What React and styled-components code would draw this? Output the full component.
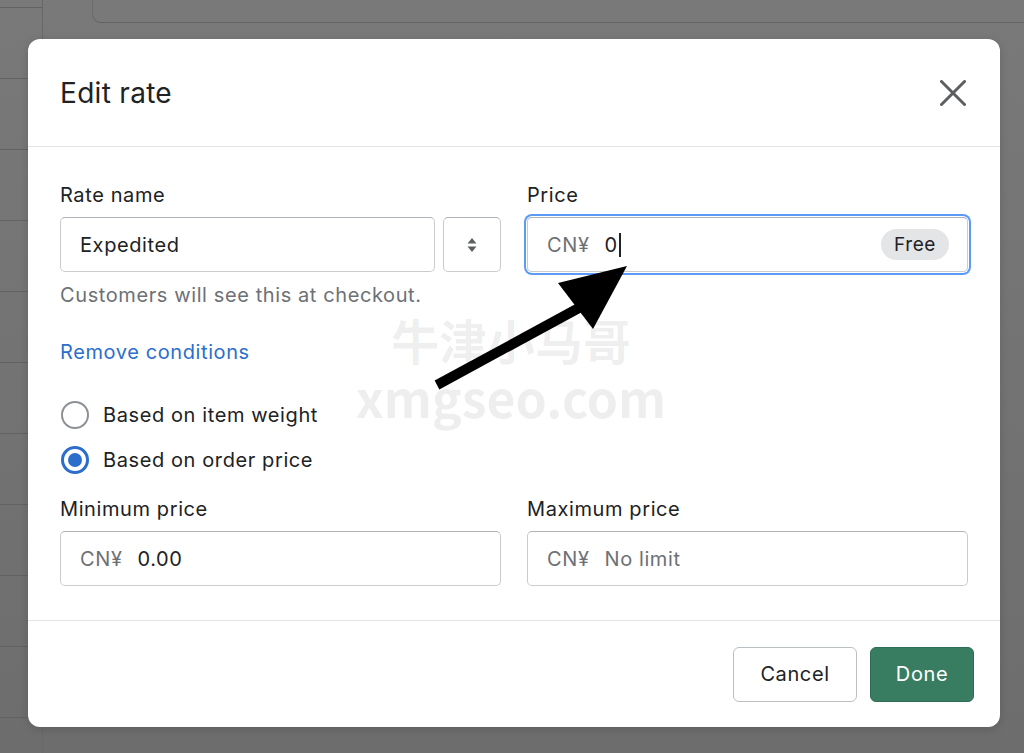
import React from 'react'
import styled, { createGlobalStyle } from 'styled-components'

const GlobalStyle = createGlobalStyle`
  html, body {
    margin: 0;
    padding: 0;
  }
  body {
    font-family: Inter, "Noto Sans", sans-serif;
    letter-spacing: 0.6px;
    background: #737373;
    -webkit-font-smoothing: antialiased;
  }
`

const Page = styled.div`
  position: relative;
  width: 1024px;
  height: 753px;
  overflow: hidden;
  display: grid;
  grid-template-columns: 43px 1fr;
  background: linear-gradient(180deg, #797979 0%, #6d6d6d 100%);
`

const SideColumn = styled.div`
  border-right: 1px solid #686868;
  display: flex;
  flex-direction: column;
`

const SideRow = styled.div`
  flex: none;
  height: ${props => (props.short ? 7 : 70)}px;
  border-bottom: 1px solid #626262;
`

const Main = styled.div`
  display: flex;
  flex-direction: column;
`

const TopCard = styled.div`
  margin-left: 50px;
  height: 22px;
  background: #797979;
  border-radius: 0 0 0 8px;
  box-shadow: 0 1px 0 #636363, -1px 0 0 #6c6c6c;
`

const Spacer = styled.div`
  flex: 1;
`

const BottomArea = styled.div`
  margin-left: 50px;
  height: 26px;
  border-left: 1px solid #666;
  padding-left: 31px;
  display: flex;
`

const AddRate = styled.div`
  width: 140px;
  box-sizing: border-box;
  border: 1px solid #5e5e5e;
  border-bottom: none;
  padding: 6px 0 0 26px;
  font-size: 20px;
  color: #1b1b1b;
`

const Modal = styled.div`
  position: absolute;
  left: 28px;
  top: 39px;
  width: 972px;
  height: 688px;
  background: #fff;
  border-radius: 12px;
  display: flex;
  flex-direction: column;
  box-shadow: 0 2px 8px rgba(0, 0, 0, 0.15);
`

const Header = styled.div`
  height: 108px;
  box-sizing: border-box;
  border-bottom: 1px solid #e1e3e5;
  display: flex;
  align-items: center;
  justify-content: space-between;
  padding: 0 34px 0 32px;
`

const Title = styled.h2`
  margin: 0;
  font-size: 28px;
  font-weight: 400;
  letter-spacing: 0.3px;
  color: #202223;
`

const CloseButton = styled.div`
  width: 26px;
  height: 26px;
  display: flex;
`

const Body = styled.div`
  flex: 1;
  padding: 36px 32px 0;
`

const Row = styled.div`
  display: grid;
  grid-template-columns: 1fr 1fr;
  column-gap: 26px;
  margin-top: ${props => props.top || 0}px;
`

const Label = styled.div`
  font-size: 20px;
  line-height: 24px;
  color: #202223;
  margin-bottom: 10px;
`

const NameRow = styled.div`
  display: flex;
  gap: 8px;
`

const InputBox = styled.div`
  flex: 1;
  height: 55px;
  box-sizing: border-box;
  border: 1px solid #c9cccf;
  border-top-color: #aeb4b9;
  border-radius: 5px;
  display: flex;
  align-items: center;
  padding: 0 18px 0 19px;
  font-size: 20px;
  color: #202223;
  box-shadow: ${props => (props.focused ? '0 0 0 1px #fff, 0 0 0 3px #5b9af5' : 'none')};
`

const Stepper = styled.div`
  width: 58px;
  height: 55px;
  box-sizing: border-box;
  border: 1px solid #c9cccf;
  border-top-color: #aeb4b9;
  border-radius: 5px;
  display: flex;
  align-items: center;
  justify-content: center;
`

const Prefix = styled.span`
  color: #6d7175;
  margin-right: 15px;
`

const Value = styled.span`
  color: ${props => (props.placeholder ? '#6d7175' : '#202223')};
`

const Caret = styled.span`
  width: 2px;
  height: 24px;
  background: #202223;
  margin-left: 1px;
`

const Badge = styled.span`
  margin-left: auto;
  height: 31px;
  padding: 0 13px;
  border-radius: 16px;
  background: #e4e5e7;
  display: flex;
  align-items: center;
  font-size: 19px;
  color: #202223;
`

const HelpText = styled.div`
  margin-top: 11px;
  font-size: 20px;
  line-height: 24px;
  color: #6d7175;
`

const Link = styled.div`
  margin-top: 33px;
  font-size: 20px;
  line-height: 24px;
  color: #2c6ecb;
`

const RadioGroup = styled.div`
  margin-top: 28px;
  display: flex;
  flex-direction: column;
`

const RadioRow = styled.label`
  height: 45px;
  display: flex;
  align-items: center;
  gap: 14px;
  padding-left: 1px;
  font-size: 20px;
  color: #202223;
`

const RadioCircle = styled.span`
  width: 28px;
  height: 28px;
  box-sizing: border-box;
  border-radius: 50%;
  border: ${props => (props.checked ? '3px solid #2c6ecb' : '2px solid #8c9196')};
  display: flex;
  align-items: center;
  justify-content: center;
  &::after {
    content: '';
    display: ${props => (props.checked ? 'block' : 'none')};
    width: 14px;
    height: 14px;
    border-radius: 50%;
    background: #2c6ecb;
  }
`

const Footer = styled.div`
  height: 107px;
  box-sizing: border-box;
  border-top: 1px solid #e1e3e5;
  display: flex;
  align-items: center;
  justify-content: flex-end;
  gap: 13px;
  padding-right: 26px;
`

const Button = styled.div`
  height: 55px;
  width: ${props => props.width}px;
  box-sizing: border-box;
  border-radius: 6px;
  display: flex;
  align-items: center;
  justify-content: center;
  font-size: 20px;
  color: ${props => (props.primary ? '#fff' : '#202223')};
  background: ${props => (props.primary ? '#387d61' : '#fff')};
  border: 1px solid ${props => (props.primary ? '#2f6e55' : '#babfc3')};
`

const Watermark = styled.div`
  position: absolute;
  left: 350px;
  top: 311px;
  width: 322px;
  display: flex;
  flex-direction: column;
  align-items: center;
  font-family: "Noto Sans CJK SC", "Noto Sans", sans-serif;
  font-weight: 700;
  letter-spacing: 0;
  color: rgba(0, 0, 0, 0.065);
  pointer-events: none;
`

const WatermarkLine = styled.div`
  font-size: ${props => props.size}px;
  line-height: ${props => props.size + 8}px;
`

const Arrow = styled.svg`
  position: absolute;
  left: 0;
  top: 0;
  pointer-events: none;
`

const App = () => {
  return (
    <>
      <GlobalStyle />
      <Page>
        <SideColumn>
          <SideRow short />
          {Array.from({ length: 11 }).map((_, i) => (
            <SideRow key={i} />
          ))}
        </SideColumn>
        <Main>
          <TopCard />
          <Spacer />
          <BottomArea>
            <AddRate>Add rate</AddRate>
          </BottomArea>
        </Main>

        <Modal>
          <Header>
            <Title>Edit rate</Title>
            <CloseButton>
              <svg width="26" height="26" viewBox="0 0 26 26">
                <path d="M1.5 1.5L24.5 24.5M24.5 1.5L1.5 24.5" stroke="#5c5f62" strokeWidth="3" strokeLinecap="round" />
              </svg>
            </CloseButton>
          </Header>

          <Body>
            <Row>
              <div>
                <Label>Rate name</Label>
                <NameRow>
                  <InputBox>Expedited</InputBox>
                  <Stepper>
                    <svg width="10" height="16" viewBox="0 0 10 16">
                      <path d="M0.5 6.5L5 1L9.5 6.5Z" fill="#5c5f62" />
                      <path d="M0.5 9.5L5 15L9.5 9.5Z" fill="#5c5f62" />
                    </svg>
                  </Stepper>
                </NameRow>
                <HelpText>Customers will see this at checkout.</HelpText>
              </div>
              <div>
                <Label>Price</Label>
                <InputBox focused>
                  <Prefix>CN¥</Prefix>
                  <Value>0</Value>
                  <Caret />
                  <Badge>Free</Badge>
                </InputBox>
              </div>
            </Row>

            <Link>Remove conditions</Link>

            <RadioGroup>
              <RadioRow>
                <RadioCircle />
                Based on item weight
              </RadioRow>
              <RadioRow>
                <RadioCircle checked />
                Based on order price
              </RadioRow>
            </RadioGroup>

            <Row top={15}>
              <div>
                <Label>Minimum price</Label>
                <InputBox>
                  <Prefix>CN¥</Prefix>
                  <Value>0.00</Value>
                </InputBox>
              </div>
              <div>
                <Label>Maximum price</Label>
                <InputBox>
                  <Prefix>CN¥</Prefix>
                  <Value placeholder>No limit</Value>
                </InputBox>
              </div>
            </Row>
          </Body>

          <Footer>
            <Button width={124}>Cancel</Button>
            <Button primary width={104}>Done</Button>
          </Footer>
        </Modal>

        <Watermark>
          <WatermarkLine size={48}>牛津小马哥</WatermarkLine>
          <WatermarkLine size={50}>xmgseo.com</WatermarkLine>
        </Watermark>

        <Arrow width="1024" height="753" viewBox="0 0 1024 753">
          <line x1="437" y1="385" x2="588" y2="303" stroke="#000" strokeWidth="10" />
          <polygon points="558,283 627,266 593,329" fill="#000" />
        </Arrow>
      </Page>
    </>
  )
}

export default App
